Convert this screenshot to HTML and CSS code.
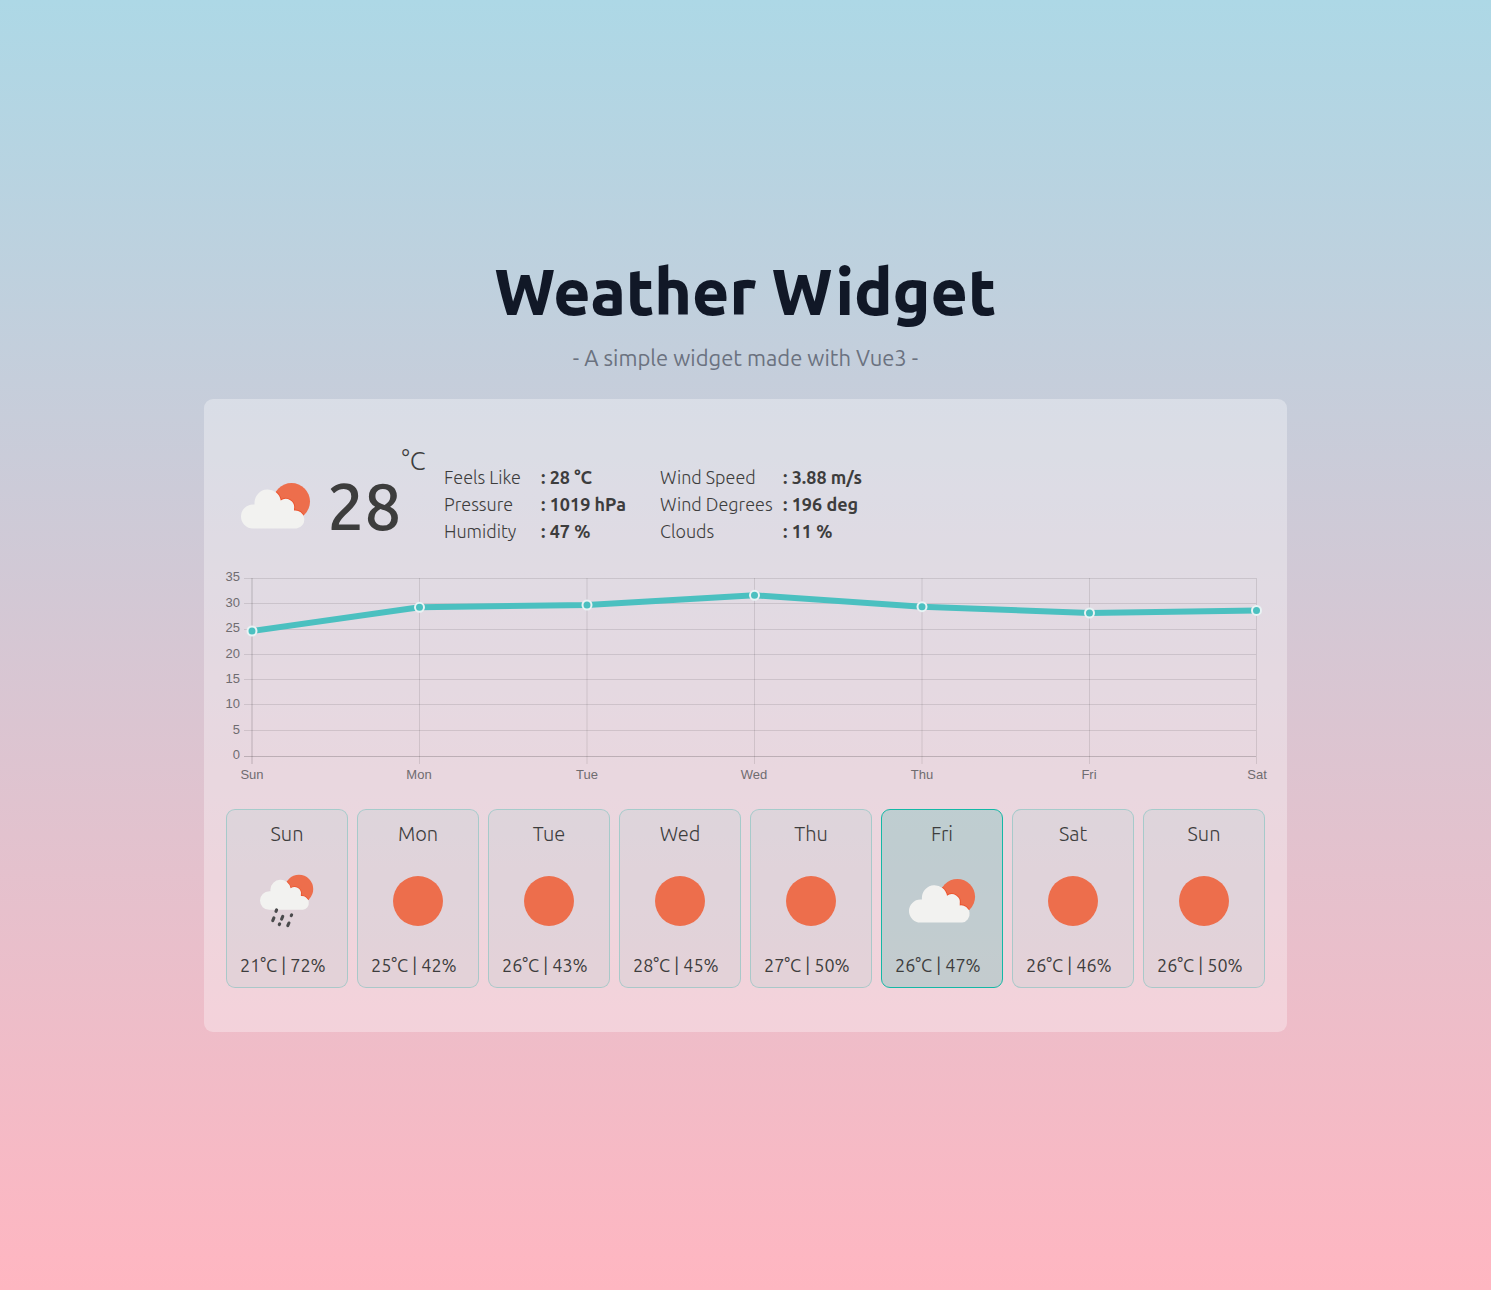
FILE: index.html
```html
<!DOCTYPE html>
<html lang="en">
<head>
<meta charset="utf-8">
<meta name="viewport" content="width=device-width, initial-scale=1">
<title>Weather Widget</title>
<link rel="stylesheet" href="styles.css">
</head>
<body>
<svg class="sprite" aria-hidden="true">
  <defs>
    <path id="cloud" d="M13 46.500a12 12 0 0 1 0-24h1.500v-2.500a13.200 13.200 0 0 1 26.200-1.500a8.500 8.500 0 0 1 13.300 8.500v1.600a9 9 0 1 1 2.500 17.900z"/>
    <clipPath id="sun-clip"><circle cx="51.500" cy="19.500" r="18.500"/></clipPath>
    <g id="cloud-sun">
      <circle class="sun" cx="51.500" cy="19.500" r="18.500"/>
      <use href="#cloud" class="sun-edge" clip-path="url(#sun-clip)"/>
      <use href="#cloud" class="cloud"/>
    </g>
    <symbol id="icon-cloudy" viewBox="0 0 72 48"><use href="#cloud-sun"/></symbol>
    <symbol id="icon-rain" viewBox="0 0 72 70">
      <use href="#cloud-sun"/>
      <path class="rain" d="M22.500 46.500l-.8 2M19 57l-1.500 3.500M30.500 55l-1.500 3.500M42 53l-.5 1M26.500 64.500l-.5 1M38.500 63.500l-1.500 3.500"/>
    </symbol>
    <symbol id="icon-sun" viewBox="0 0 52 52"><circle class="sun" cx="26" cy="26" r="25"/></symbol>
  </defs>
</svg>

<main class="page">
  <header class="intro">
    <h1 class="title">Weather Widget</h1>
    <p class="subtitle">- A simple widget made with Vue3 -</p>
  </header>

  <section class="widget" aria-label="Weather">
    <div class="current">
      <svg class="current-icon" role="img" aria-label="Partly cloudy"><use href="#icon-cloudy"/></svg>
      <p class="temperature">28<span class="unit">°C</span></p>
      <dl class="details">
        <dt>Feels Like</dt><dd>: 28 °C</dd>
        <dt>Wind Speed</dt><dd>: 3.88 m/s</dd>
        <dt>Pressure</dt><dd>: 1019 hPa</dd>
        <dt>Wind Degrees</dt><dd>: 196 deg</dd>
        <dt>Humidity</dt><dd>: 47 %</dd>
        <dt>Clouds</dt><dd>: 11 %</dd>
      </dl>
    </div>

    <svg class="chart" viewBox="0 0 1039 216" role="img" aria-label="Temperature by day">
      <path class="grid" d="M18 11.500H1030M18 36.500H1030M18 62.500H1030M18 87.500H1030M18 112.500H1030M18 137.500H1030M18 163.500H1030M193.500 11V197M361 11V197M528.500 11V197M696 11V197M863.500 11V197M1030.500 11V197"/>
      <path class="axis" d="M18 189.500H1030M26 11V197"/>
      <g class="ticks-y">
        <text x="14" y="14">35</text><text x="14" y="40">30</text><text x="14" y="65">25</text><text x="14" y="91">20</text>
        <text x="14" y="116">15</text><text x="14" y="141">10</text><text x="14" y="167">5</text><text x="14" y="192">0</text>
      </g>
      <g class="ticks-x">
        <text x="26" y="212">Sun</text><text x="193" y="212">Mon</text><text x="361" y="212">Tue</text><text x="528" y="212">Wed</text>
        <text x="696" y="212">Thu</text><text x="863" y="212">Fri</text><text x="1031" y="212">Sat</text>
      </g>
      <polyline class="line" points="26,64 193.500,40.300 361,38 528.500,28.300 696,39.700 863.500,46 1030.500,43.400"/>
      <g class="points">
        <circle cx="26" cy="64" r="4.500"/><circle cx="193.500" cy="40.300" r="4.500"/><circle cx="361" cy="38" r="4.500"/>
        <circle cx="528.500" cy="28.300" r="4.500"/><circle cx="696" cy="39.700" r="4.500"/><circle cx="863.500" cy="46" r="4.500"/>
        <circle cx="1030.500" cy="43.400" r="4.500"/>
      </g>
    </svg>

    <div class="days">
      <button class="day" type="button"><span class="day-name">Sun</span><svg class="day-icon rainy" aria-hidden="true"><use href="#icon-rain"/></svg><span class="day-data">21°C | 72%</span></button>
      <button class="day" type="button"><span class="day-name">Mon</span><svg class="day-icon" aria-hidden="true"><use href="#icon-sun"/></svg><span class="day-data">25°C | 42%</span></button>
      <button class="day" type="button"><span class="day-name">Tue</span><svg class="day-icon" aria-hidden="true"><use href="#icon-sun"/></svg><span class="day-data">26°C | 43%</span></button>
      <button class="day" type="button"><span class="day-name">Wed</span><svg class="day-icon" aria-hidden="true"><use href="#icon-sun"/></svg><span class="day-data">28°C | 45%</span></button>
      <button class="day" type="button"><span class="day-name">Thu</span><svg class="day-icon" aria-hidden="true"><use href="#icon-sun"/></svg><span class="day-data">27°C | 50%</span></button>
      <button class="day selected" type="button" aria-pressed="true"><span class="day-name">Fri</span><svg class="day-icon cloudy" aria-hidden="true"><use href="#icon-cloudy"/></svg><span class="day-data">26°C | 47%</span></button>
      <button class="day" type="button"><span class="day-name">Sat</span><svg class="day-icon" aria-hidden="true"><use href="#icon-sun"/></svg><span class="day-data">26°C | 46%</span></button>
      <button class="day" type="button"><span class="day-name">Sun</span><svg class="day-icon" aria-hidden="true"><use href="#icon-sun"/></svg><span class="day-data">26°C | 50%</span></button>
    </div>
  </section>
</main>
</body>
</html>
```
FILE: styles.css
```css
* {
  box-sizing: border-box;
  margin: 0;
}

body {
  color: #3d3d3d;
  font-family: Ubuntu, "Noto Sans", sans-serif;
  font-size: 18px;
  background: linear-gradient(#add8e6, #ffb6c1);
}

.sprite {
  display: block;
  width: 0;
  height: 0;
}

.sun { fill: #ed6e4c; }
.cloud { fill: #f2f2f0; }
.sun-edge { fill: none; stroke: #eb5530; stroke-width: 2; }
.rain { fill: none; stroke: #4a4a4c; stroke-width: 4; stroke-linecap: round; }

.page {
  display: flex;
  flex-direction: column;
  justify-content: center;
  align-items: center;
  min-height: 100vh;
  padding: 0 16px;
}

.intro {
  text-align: center;
}

.title {
  color: #111827;
  font-size: 64px;
  font-weight: 800;
  line-height: 66px;
}

.subtitle {
  margin: 18px 0 26px;
  color: #6b7280;
  font-size: 22px;
  line-height: 31px;
}

.widget {
  width: 100%;
  max-width: 1083px;
  padding: 44px 22px;
  border-radius: 9px;
  background: rgba(255, 255, 255, 0.33);
}

.current {
  display: flex;
  align-items: flex-end;
  height: 124px;
  padding: 0 0 22px 14px;
}

.current-icon {
  width: 72px;
  height: 48px;
  margin-bottom: 15px;
}

.temperature {
  display: flex;
  align-items: flex-start;
  width: 117px;
  margin-left: 15px;
  font-size: 66px;
  font-weight: 500;
  line-height: 80px;
}

.unit {
  margin-top: -19px;
  font-size: 26px;
  font-weight: 300;
  line-height: 30px;
}

.details {
  display: grid;
  grid-template-columns: 97px 119px 123px auto;
  line-height: 27px;
  white-space: nowrap;
}

.details dt { font-weight: 300; }
.details dd { font-weight: 700; }

.chart {
  display: block;
  width: 100%;
  margin-bottom: 26px;
  overflow: visible;
}

.grid,
.axis {
  fill: none;
  stroke: rgba(0, 0, 0, 0.1);
}

.axis { stroke: rgba(0, 0, 0, 0.19); }

.ticks-y,
.ticks-x {
  fill: #6f6c70;
  font-family: "Liberation Sans", Arial, sans-serif;
  font-size: 13px;
}

.ticks-y { text-anchor: end; }
.ticks-x { text-anchor: middle; }

.line {
  fill: none;
  stroke: #4bc0c0;
  stroke-width: 6;
}

.points {
  fill: #4bc0c0;
  stroke: #e9f3f4;
  stroke-width: 2;
}

.days {
  display: grid;
  grid-template-columns: repeat(8, 1fr);
  gap: 9px;
}

.day {
  display: flex;
  flex-direction: column;
  align-items: center;
  justify-content: space-between;
  height: 179px;
  padding: 9px 0;
  border: 1px solid rgba(13, 178, 160, 0.27);
  border-radius: 9px;
  background: rgba(190, 206, 210, 0.27);
  color: inherit;
  font: inherit;
  cursor: pointer;
}

.day.selected {
  border-color: #14b8a6;
  background: rgba(110, 190, 184, 0.35);
}

.day-name {
  font-size: 20px;
  font-weight: 300;
  line-height: 30px;
}

.day-icon { width: 52px; height: 52px; }
.day-icon.cloudy { width: 69px; height: 46px; }
.day-icon.rainy { width: 56px; height: 54px; }

.day-data {
  align-self: flex-start;
  padding-left: 13px;
  font-size: 18px;
  line-height: 26px;
  white-space: nowrap;
}
```
